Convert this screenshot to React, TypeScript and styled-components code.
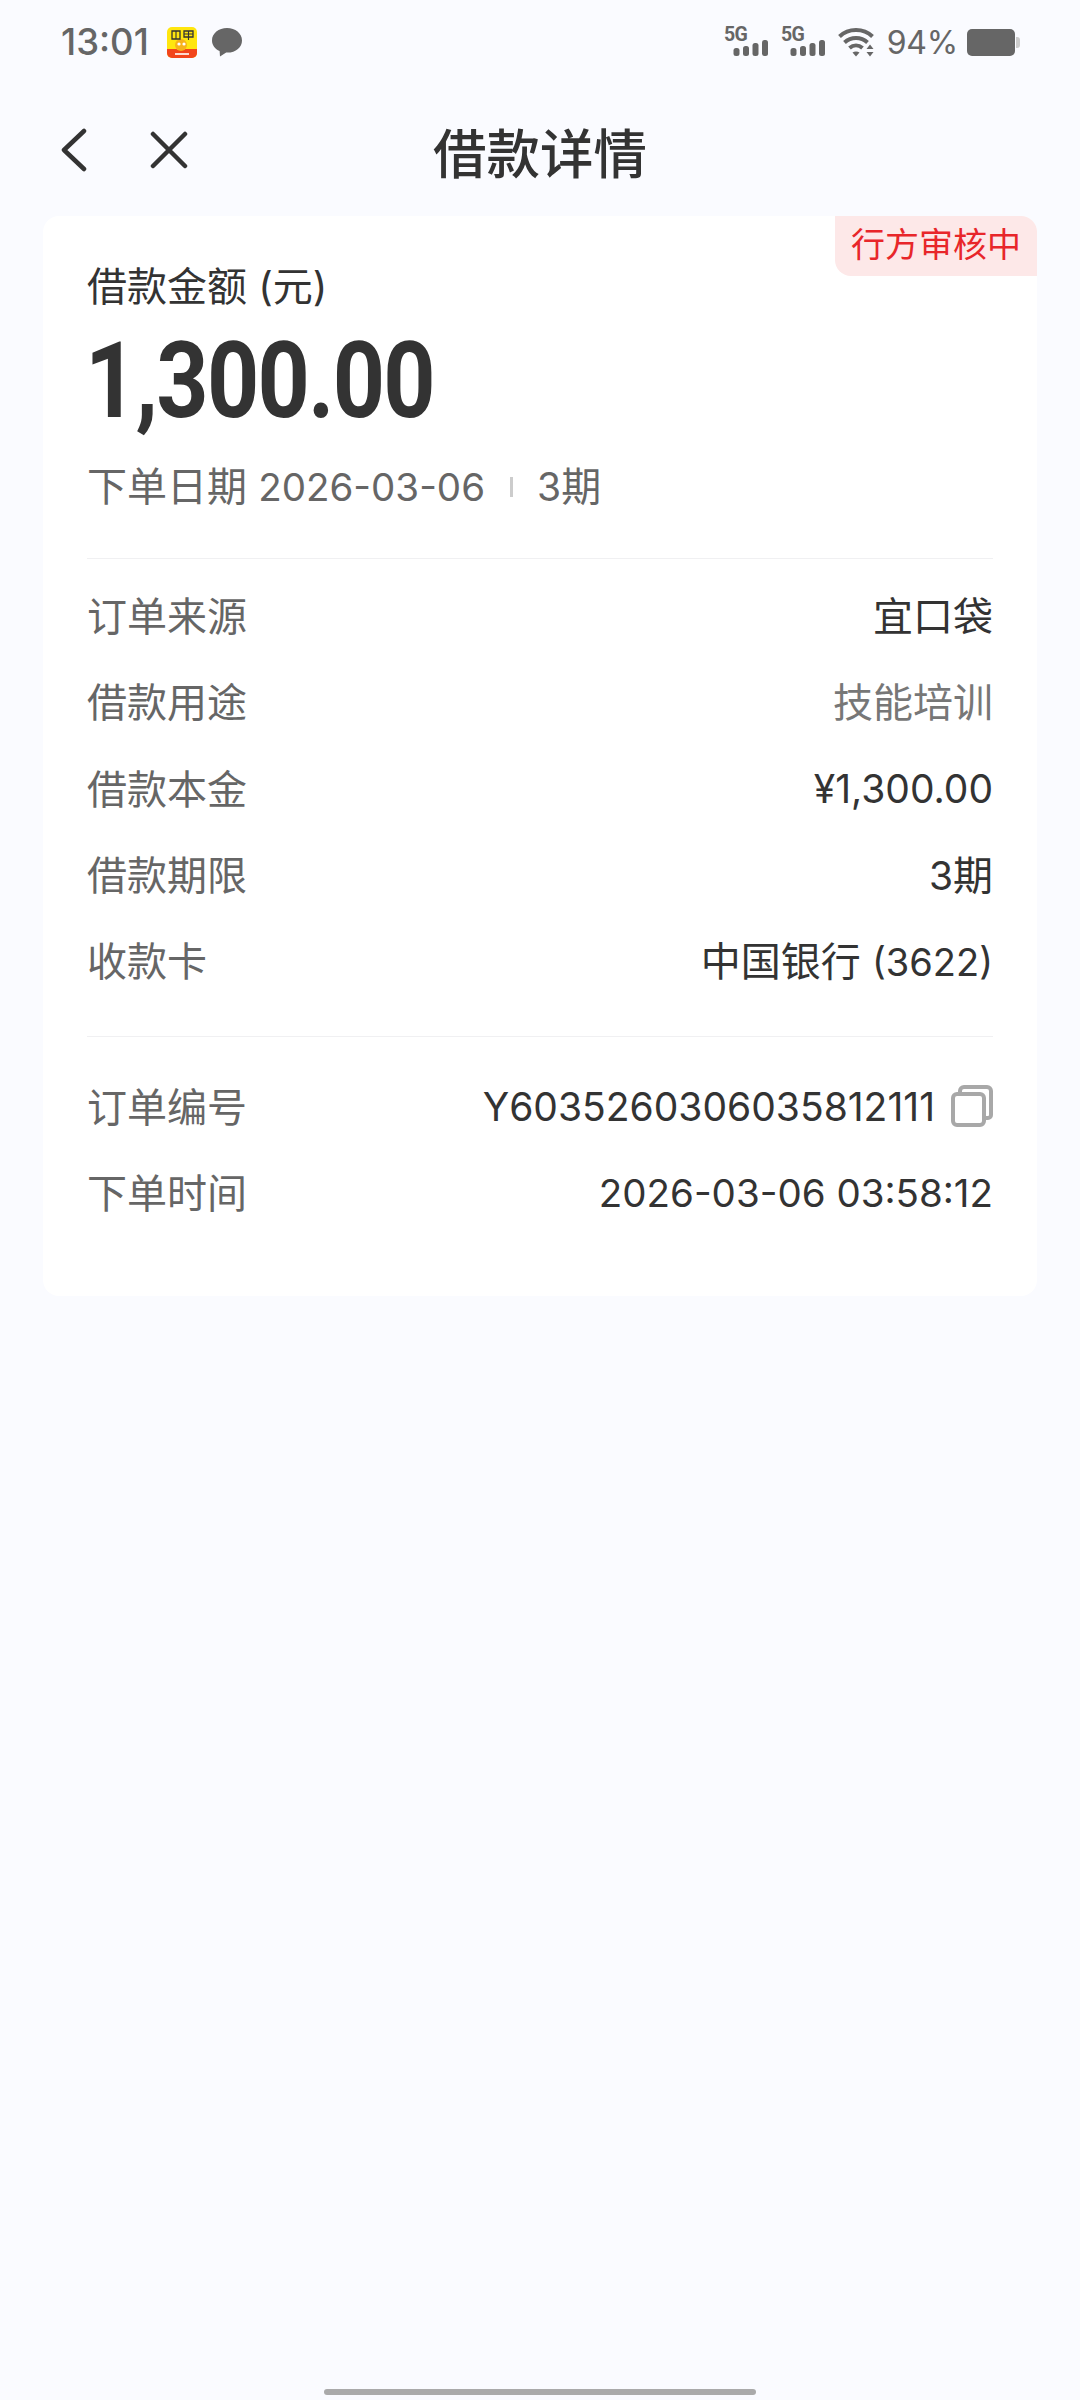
import React from "react";
import styled, { createGlobalStyle } from "styled-components";

const GlobalStyle = createGlobalStyle`
  html, body {
    margin: 0;
    padding: 0;
    background: #fafbff;
  }
  * {
    box-sizing: border-box;
  }
`;

const FONT = `Inter, "Noto Sans CJK SC", sans-serif`;

const Page = styled.div`
  width: 1080px;
  height: 2400px;
  display: flex;
  flex-direction: column;
  background: #fafbff;
  font-family: ${FONT};
  color: #333;
`;

const StatusBar = styled.div`
  height: 84px;
  padding: 0 60px 0 61px;
  display: flex;
  align-items: center;
  justify-content: space-between;
  color: #666;
`;

const StatusLeft = styled.div`
  display: flex;
  align-items: center;
  gap: 15px;
`;

const StatusRight = styled.div`
  display: flex;
  align-items: center;
  gap: 13px;
`;

const Clock = styled.span`
  font-size: 36.5px;
  font-weight: 500;
  margin-right: 3px;
`;

const Battery = styled.span`
  font-size: 32px;
  margin-right: -4px;
  letter-spacing: -0.2px;
`;

const SignalSvg = styled.svg`
  margin-top: -4px;
`;

const NavBar = styled.div`
  position: relative;
  height: 132px;
  display: flex;
  align-items: center;
  justify-content: center;
`;

const NavIcons = styled.div`
  position: absolute;
  left: 60px;
  top: 44px;
  display: flex;
  gap: 62px;
  align-items: center;
`;

const Title = styled.h1`
  margin: 0;
  font-size: 53.5px;
  font-weight: 500;
  color: #333;
`;

const Card = styled.section`
  position: relative;
  margin: 0 43px;
  height: 1080px;
  background: #fff;
  border-radius: 16px;
  padding: 44px 44px 0;
`;

const Badge = styled.div`
  position: absolute;
  top: 0;
  right: 0;
  width: 202px;
  height: 60px;
  background: #fde8e8;
  border-radius: 0 16px 0 16px;
  color: #e8262a;
  font-size: 34px;
  line-height: 58px;
  text-align: center;
`;

const AmountLabel = styled.div`
  font-size: 40px;
  line-height: 54px;
  color: #333;
`;

const Amount = styled.div`
  margin: 12px 0 0 -2px;
  font-family: Roboto, sans-serif;
  font-size: 106px;
  font-weight: 700;
  line-height: 110px;
  color: #333;
  letter-spacing: -2px;
  transform: scaleX(0.86);
  transform-origin: left center;
`;

const Meta = styled.div`
  margin-top: 24px;
  display: flex;
  align-items: center;
  font-size: 40px;
  line-height: 54px;
  color: #666;
`;

const MetaSep = styled.span`
  width: 3px;
  height: 20px;
  margin: 0 24px 0 25px;
  background: #ccc;
`;

// latin and digits run a little narrower than Inter at the CJK size
const Num = styled.span<{ $size?: number }>`
  font-size: ${(p) => p.$size ?? 39}px;
`;

const RowNum = styled(Num)`
  vertical-align: -2px;
`;

const Divider = styled.div`
  height: 1px;
  background: #f0f0f2;
`;

const Section = styled.div<{ $top: number }>`
  margin-top: ${(p) => p.$top}px;
  display: flex;
  flex-direction: column;
`;

const Row = styled.div`
  height: 86.3px;
  display: flex;
  align-items: center;
  justify-content: space-between;
  font-size: 40px;
`;

const RowLabel = styled.span`
  color: #666;
`;

const RowValue = styled.span<{ $muted?: boolean }>`
  display: flex;
  align-items: center;
  gap: 16px;
  white-space: pre;
  color: ${(p) => (p.$muted ? "#777" : "#333")};
`;

const CopySvg = styled.svg`
  margin-top: 2px;
`;

const HomeBar = styled.div`
  margin: auto auto 5px;
  width: 432px;
  height: 6px;
  border-radius: 3px;
  background: #aaa;
`;

const AppIcon = () => (
  <svg width="30" height="31" viewBox="0 0 30 31">
    <rect width="30" height="31" rx="5" fill="#ffe60f" />
    <path d="M0 22h30v4a5 5 0 0 1-5 5H5a5 5 0 0 1-5-5z" fill="#f2451c" />
    <circle cx="14" cy="18" r="6" fill="#f7b21a" />
    <circle cx="12" cy="17" r="1.6" fill="#fff" />
    <circle cx="17" cy="17" r="1.6" fill="#fff" />
    <path d="M5 4h8v8H5zM17 4h9v6h-9z" fill="none" stroke="#333" strokeWidth="1.3" />
    <path d="M9 4v8M21.500 4v9M17 7h9" stroke="#333" strokeWidth="1.1" />
    <path d="M8 27h14" stroke="#fff" strokeWidth="1.6" />
  </svg>
);

const ChatIcon = () => (
  <svg width="30" height="29" viewBox="0 0 30 29">
    <path d="M15 0C6.700 0 0 5.400 0 12.400c0 4.600 3 8.500 7.600 10.500L8 28.500l6.200-4C23.500 25 30 19.300 30 12.400 30 5.400 23.300 0 15 0z" fill="#666" />
  </svg>
);

const Signal = () => (
  <SignalSvg width="44" height="34" viewBox="0 0 44 34" fill="#666">
    <text x="0" y="18" fontFamily="Roboto, sans-serif" fontWeight="700" fontSize="19.500" letterSpacing="-0.6">5G</text>
    <rect x="9.500" y="25" width="6" height="8" rx="2.500" />
    <rect x="19" y="23" width="6" height="10" rx="2.500" />
    <rect x="28.500" y="20" width="6" height="13" rx="2.500" />
    <rect x="38" y="17" width="6" height="16" rx="2.500" />
  </SignalSvg>
);

const Wifi = () => (
  <svg width="36" height="30" viewBox="0 0 36 30" fill="none" stroke="#666" strokeWidth="4">
    <path d="M1.500 9.500C10.500 0.800 25.500 0.800 34.500 9.500" />
    <path d="M6.500 15.500C13 9.500 23 9.500 29.500 15.500" />
    <path d="M11.500 21c4-3.500 9-3.500 13 0" />
    <path d="M14.500 25.500c2-1.500 5-1.500 7 0L18 29.500z" fill="#666" stroke="none" />
    <path d="M32 17.500l-3.500 4.500h7zM32 29.500l-3.500-4.500h7z" fill="#666" stroke="none" />
  </svg>
);

const BatteryIcon = () => (
  <svg width="53" height="27" viewBox="0 0 53 27">
    <rect x="0" y="0" width="48" height="27" rx="5" fill="#666" />
    <path d="M49 8h1a3 3 0 0 1 3 3v5a3 3 0 0 1-3 3h-1z" fill="#ccc" />
  </svg>
);

const BackIcon = () => (
  <svg width="28" height="44" viewBox="0 0 28 44" fill="none" stroke="#333" strokeWidth="4.500" strokeLinecap="round" strokeLinejoin="round">
    <path d="M24 3L4 22l20 19" />
  </svg>
);

const CloseIcon = () => (
  <svg width="38" height="38" viewBox="0 0 38 38" fill="none" stroke="#333" strokeWidth="4.500" strokeLinecap="round">
    <path d="M3 3l32 32M35 3L3 35" />
  </svg>
);

const CopyIcon = () => (
  <CopySvg width="42" height="42" viewBox="0 0 42 42" fill="none" stroke="#a8a8a8" strokeWidth="4" strokeLinejoin="round">
    <rect x="2" y="9" width="31" height="31" rx="4" />
    <path d="M9 9V6a4 4 0 0 1 4-4h23a4 4 0 0 1 4 4v24a3 3 0 0 1-3 3h-4" />
  </CopySvg>
);

const App: React.FC = () => {
  const details = [
    { label: "订单来源", value: "宜口袋" },
    { label: "借款用途", value: "技能培训", muted: true },
    { label: "借款本金", value: <span><RowNum>¥1,300.00</RowNum></span> },
    { label: "借款期限", value: <span><Num>3</Num>期</span> },
    { label: "收款卡", value: <span>中国银行 <Num $size={38}>(3622)</Num></span> },
  ];

  return (
    <Page>
      <GlobalStyle />
      <StatusBar>
        <StatusLeft>
          <Clock>13:01</Clock>
          <AppIcon />
          <ChatIcon />
        </StatusLeft>
        <StatusRight>
          <Signal />
          <Signal />
          <Wifi />
          <Battery>94%</Battery>
          <BatteryIcon />
        </StatusRight>
      </StatusBar>

      <NavBar>
        <NavIcons>
          <BackIcon />
          <CloseIcon />
        </NavIcons>
        <Title>借款详情</Title>
      </NavBar>

      <Card>
        <Badge>行方审核中</Badge>
        <AmountLabel>借款金额 (元)</AmountLabel>
        <Amount>1,300.00</Amount>
        <Meta>
          <span>下单日期 <Num $size={38.5}>2026-03-06</Num></span>
          <MetaSep />
          <span><Num>3</Num>期</span>
        </Meta>
        <Section $top={44}>
          <Divider />
        </Section>
        <Section $top={12}>
          {details.map((row) => (
            <Row key={row.label}>
              <RowLabel>{row.label}</RowLabel>
              <RowValue $muted={row.muted}>{row.value}</RowValue>
            </Row>
          ))}
        </Section>
        <Section $top={34}>
          <Divider />
        </Section>
        <Section $top={24}>
          <Row>
            <RowLabel>订单编号</RowLabel>
            <RowValue>
              <span><RowNum>Y6035260306035812111</RowNum></span>
              <CopyIcon />
            </RowValue>
          </Row>
          <Row>
            <RowLabel>下单时间</RowLabel>
            <RowValue><span><RowNum $size={38.5}>2026-03-06 03:58:12</RowNum></span></RowValue>
          </Row>
        </Section>
      </Card>

      <HomeBar />
    </Page>
  );
};

export default App;
